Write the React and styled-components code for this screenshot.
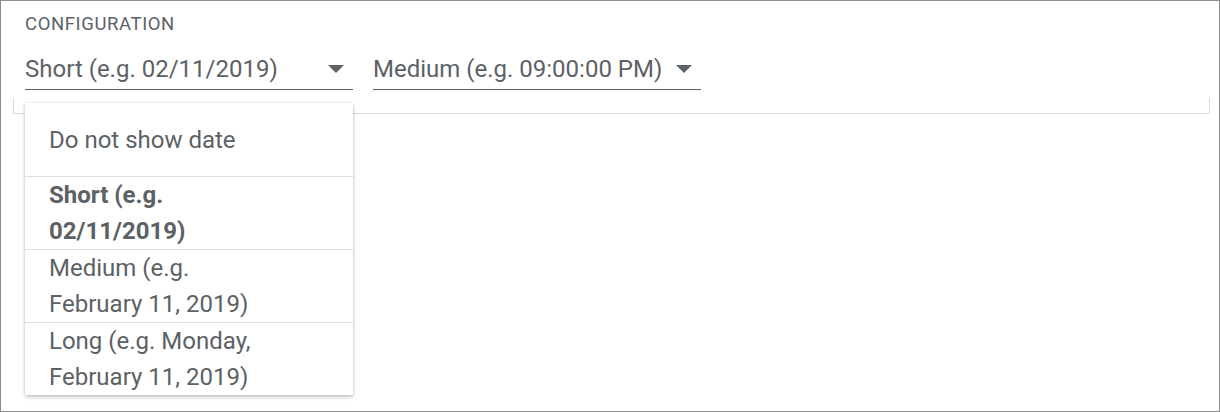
import React from "react";
import styled, { createGlobalStyle } from "styled-components";

const Global = createGlobalStyle`
  html, body { margin: 0; padding: 0; background: #fff; }
  body { font-family: Roboto, "Noto Sans", Arial, sans-serif; }
  * { box-sizing: border-box; }
`;

const Frame = styled.div`
  position: relative;
  width: 1220px;
  height: 412px;
  border: 1px solid #8c8c8c;
  background: #fff;
  overflow: hidden;
`;

const Section = styled.div`
  padding: 12px 0 0 24px;
`;

const Label = styled.div`
  font-size: 18.5px;
  line-height: 22px;
  color: #5c6166;
  letter-spacing: 0.6px;
`;

const Row = styled.div`
  display: flex;
  gap: 20px;
  margin-top: 14px;
`;

const SelectWrap = styled.div`
  position: relative;
`;

const Select = styled.div`
  width: 328px;
  height: 41px;
  display: flex;
  align-items: center;
  justify-content: space-between;
  border-bottom: 1px solid #5c6166;
  font-size: 24px;
  color: #5c6166;
  padding-right: 9px;
  cursor: pointer;
`;

const Arrow = styled.svg`
  width: 16px;
  height: 8px;
  fill: #5c6166;
  flex: none;
`;

const FieldBox = styled.div`
  margin: 8px 9px 0 12px;
  height: 16px;
  border: 1px solid #dcdcdc;
  border-top: none;
`;

const Menu = styled.ul`
  position: absolute;
  top: 54px;
  left: 0;
  width: 328px;
  margin: 0;
  padding: 0;
  list-style: none;
  background: #fff;
  box-shadow: 0 2px 4px rgba(0, 0, 0, 0.22), 0 0 2px rgba(0, 0, 0, 0.12);
  z-index: 5;
`;

const Item = styled.li`
  padding: ${(p) => (p.$single ? "19px 80px 18px 24px" : "0 80px 0 24px")};
  font-size: 24px;
  line-height: 36px;
  color: #5c6166;
  font-weight: ${(p) => (p.$selected ? 700 : 400)};
  & + & { border-top: 1px solid #dedede; }
`;

const ArrowIcon = () => (
  <Arrow viewBox="0 0 16 8">
    <path d="M0 0 L16 0 L8 8 Z" />
  </Arrow>
);

export default function App() {
  return (
    <>
      <Global />
      <Frame>
        <Section>
          <Label>CONFIGURATION</Label>
          <Row>
            <SelectWrap>
              <Select>
                <span>Short (e.g. 02/11/2019)</span>
                <ArrowIcon />
              </Select>
              <Menu>
                <Item $single>Do not show date</Item>
                <Item $selected>Short (e.g. 02/11/2019)</Item>
                <Item>Medium (e.g. February 11, 2019)</Item>
                <Item>Long (e.g. Monday, February 11, 2019)</Item>
              </Menu>
            </SelectWrap>
            <SelectWrap>
              <Select>
                <span>Medium (e.g. 09:00:00 PM)</span>
                <ArrowIcon />
              </Select>
            </SelectWrap>
          </Row>
        </Section>
        <FieldBox />
      </Frame>
    </>
  );
}
